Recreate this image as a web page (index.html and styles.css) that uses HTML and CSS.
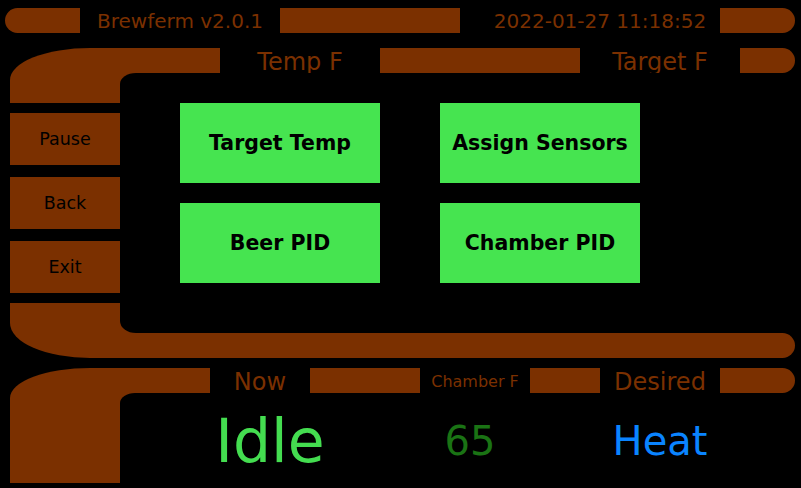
FILE: index.html
```html
<!DOCTYPE html>
<html lang="en">
<head>
  <meta charset="UTF-8">
  <title>Brewferm</title>
  <link rel="stylesheet" href="styles.css">
</head>
<body>
  <div class="header">
    <div class="bar cap-left"></div>
    <div class="title">Brewferm v2.0.1</div>
    <div class="bar"></div>
    <div class="title clock">2022-01-27 11:18:52</div>
    <div class="bar cap-right"></div>
  </div>

  <div class="frame upper">
    <div class="side">
      <div class="corner corner-top"></div>
      <div class="side-buttons">
        <button class="side-btn">Pause</button>
        <button class="side-btn">Back</button>
        <button class="side-btn">Exit</button>
      </div>
      <div class="corner corner-bottom"></div>
    </div>
    <div class="main">
      <div class="strip strip-upper">
        <div class="bar"></div>
        <div class="label">Temp F</div>
        <div class="bar"></div>
        <div class="label">Target F</div>
        <div class="bar cap-right"></div>
      </div>
      <div class="panel menu">
        <button class="menu-btn">Target Temp</button>
        <button class="menu-btn">Assign Sensors</button>
        <button class="menu-btn">Beer PID</button>
        <button class="menu-btn">Chamber PID</button>
      </div>
      <div class="bar footer-bar"></div>
    </div>
  </div>

  <div class="frame lower">
    <div class="side">
      <div class="corner corner-tall"></div>
    </div>
    <div class="main">
      <div class="strip strip-lower">
        <div class="bar"></div>
        <div class="label">Now</div>
        <div class="bar"></div>
        <div class="label small">Chamber F</div>
        <div class="bar"></div>
        <div class="label">Desired</div>
        <div class="bar cap-right"></div>
      </div>
      <div class="panel readout">
        <div class="state">Idle</div>
        <div class="temp">65</div>
        <div class="mode">Heat</div>
      </div>
    </div>
  </div>
</body>
</html>
```
FILE: styles.css
```css
html, body {
  background: #000;
}
body {
  margin: 0;
  font-family: "DejaVu Sans", sans-serif;
  color: #7b3000;
}

.bar { background: #7b3000; }
.cap-left { border-radius: 12.5px 0 0 12.5px; }
.cap-right { border-radius: 0 12.5px 12.5px 0; }

.header {
  display: grid;
  grid-template-columns: 75px 200px 180px 260px 75px;
  height: 25px;
  margin: 8px 0 0 5px;
}
.title {
  font-size: 20px;
  display: flex;
  align-items: center;
  justify-content: center;
}
.clock { padding-left: 20px; }

.frame {
  display: flex;
  width: 785px;
  margin-left: 10px;
}
.upper { margin-top: 15px; height: 310px; }
.lower { margin-top: 10px; height: 115px; }

.side {
  width: 110px;
  display: flex;
  flex-direction: column;
}
.corner {
  background: #7b3000;
  height: 55px;
}
.corner-top { border-top-left-radius: 80px 32px; }
.corner-bottom { border-bottom-left-radius: 80px 35px; }
.corner-tall {
  height: 115px;
  border-top-left-radius: 80px 30px;
}

.side-buttons {
  display: flex;
  flex-direction: column;
  gap: 12px;
  padding: 10px 0;
}
.side-btn {
  height: 52px;
  background: #7b3000;
  color: #000;
  border: none;
  font-family: inherit;
  font-size: 17.5px;
  padding: 0;
}

.main {
  flex: 1;
  display: flex;
  flex-direction: column;
  background: linear-gradient(#7b3000, #7b3000) no-repeat 0 0 / 20px 100%;
}
.strip {
  display: grid;
  height: 25px;
}
.strip-upper { grid-template-columns: 100px 160px 200px 160px 55px; }
.strip-lower { grid-template-columns: 90px 100px 110px 110px 70px 120px 75px; }
.label {
  background: #000;
  font-size: 24px;
  line-height: 1;
  display: flex;
  align-items: center;
  justify-content: center;
  padding-top: 3px;
  box-sizing: border-box;
  height: 25px;
}
.label.small { font-size: 16px; }

.panel {
  flex: 1;
  background: #000;
}
.menu {
  border-radius: 16px 0 0 16px / 11px 0 0 12px;
  display: grid;
  grid-template-columns: 200px 200px;
  grid-auto-rows: 80px;
  gap: 20px 60px;
  padding: 30px 0 0 60px;
}
.menu-btn {
  background: #46e450;
  color: #000;
  border: none;
  font-family: inherit;
  font-weight: bold;
  font-size: 20.5px;
  padding: 0;
}
.footer-bar {
  height: 25px;
  border-radius: 0 12.5px 12.5px 0;
}

.readout {
  border-radius: 15px 0 0 0 / 10px 0 0 0;
  display: grid;
  grid-template-columns: 300px 100px 1fr;
  align-items: center;
  text-align: center;
  padding-top: 6px;
  line-height: 1;
}
.state { font-size: 60px; color: #44dd50; }
.temp { font-size: 40px; color: #1a7314; }
.mode { font-size: 40px; color: #0a84ff; padding-left: 5px; }
```
